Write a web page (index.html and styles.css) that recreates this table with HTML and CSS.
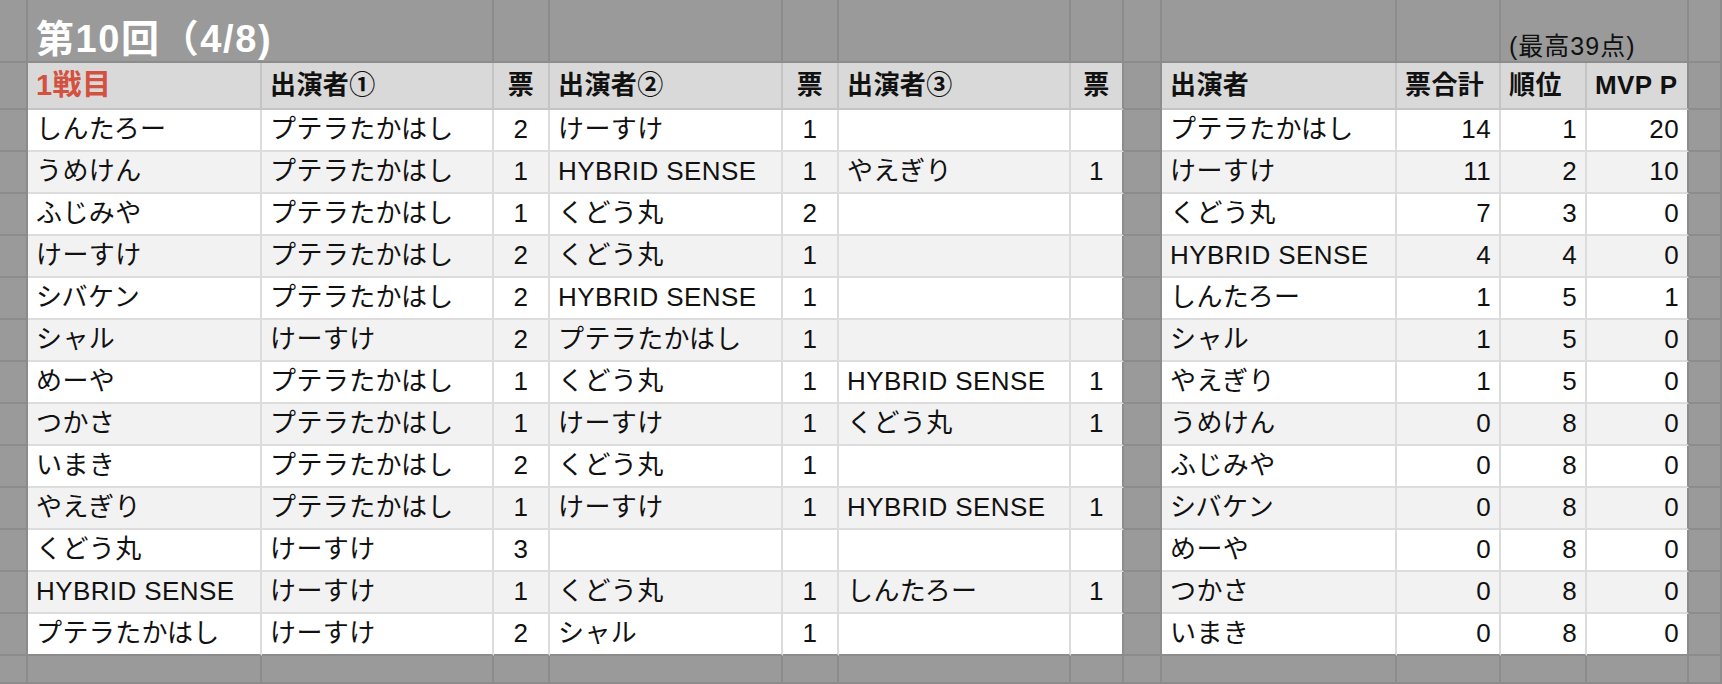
FILE: index.html
```html
<!DOCTYPE html>
<html lang="ja">
<head>
<meta charset="utf-8">
<link rel="stylesheet" href="styles.css">
</head>
<body>
<div class="sheet">
  <div class="row">
    <div class="g"></div>
    <div class="g title">第10回（4/8)</div>
    <div class="g"></div><div class="g"></div><div class="g"></div><div class="g"></div><div class="g"></div>
    <div class="g"></div>
    <div class="g"></div><div class="g"></div>
    <div class="g note">(最高39点)</div>
    <div class="g"></div>
  </div>
  <div class="row">
    <div class="g"></div>
    <div class="h red">1戦目</div><div class="h">出演者①</div><div class="h m">票</div><div class="h">出演者②</div><div class="h m">票</div><div class="h">出演者③</div><div class="h m end">票</div>
    <div class="g"></div>
    <div class="h">出演者</div><div class="h">票合計</div><div class="h">順位</div><div class="h end">MVP P</div>
    <div class="g"></div>
  </div>
  <div class="row">
    <div class="g"></div>
    <div class="c">しんたろー</div><div class="c">プテラたかはし</div><div class="c m">2</div><div class="c">けーすけ</div><div class="c m">1</div><div class="c"></div><div class="c m end"></div>
    <div class="g"></div>
    <div class="c">プテラたかはし</div><div class="c r">14</div><div class="c r">1</div><div class="c r end">20</div>
    <div class="g"></div>
  </div>
  <div class="row alt">
    <div class="g"></div>
    <div class="c">うめけん</div><div class="c">プテラたかはし</div><div class="c m">1</div><div class="c">HYBRID SENSE</div><div class="c m">1</div><div class="c">やえぎり</div><div class="c m end">1</div>
    <div class="g"></div>
    <div class="c">けーすけ</div><div class="c r">11</div><div class="c r">2</div><div class="c r end">10</div>
    <div class="g"></div>
  </div>
  <div class="row">
    <div class="g"></div>
    <div class="c">ふじみや</div><div class="c">プテラたかはし</div><div class="c m">1</div><div class="c">くどう丸</div><div class="c m">2</div><div class="c"></div><div class="c m end"></div>
    <div class="g"></div>
    <div class="c">くどう丸</div><div class="c r">7</div><div class="c r">3</div><div class="c r end">0</div>
    <div class="g"></div>
  </div>
  <div class="row alt">
    <div class="g"></div>
    <div class="c">けーすけ</div><div class="c">プテラたかはし</div><div class="c m">2</div><div class="c">くどう丸</div><div class="c m">1</div><div class="c"></div><div class="c m end"></div>
    <div class="g"></div>
    <div class="c">HYBRID SENSE</div><div class="c r">4</div><div class="c r">4</div><div class="c r end">0</div>
    <div class="g"></div>
  </div>
  <div class="row">
    <div class="g"></div>
    <div class="c">シバケン</div><div class="c">プテラたかはし</div><div class="c m">2</div><div class="c">HYBRID SENSE</div><div class="c m">1</div><div class="c"></div><div class="c m end"></div>
    <div class="g"></div>
    <div class="c">しんたろー</div><div class="c r">1</div><div class="c r">5</div><div class="c r end">1</div>
    <div class="g"></div>
  </div>
  <div class="row alt">
    <div class="g"></div>
    <div class="c">シャル</div><div class="c">けーすけ</div><div class="c m">2</div><div class="c">プテラたかはし</div><div class="c m">1</div><div class="c"></div><div class="c m end"></div>
    <div class="g"></div>
    <div class="c">シャル</div><div class="c r">1</div><div class="c r">5</div><div class="c r end">0</div>
    <div class="g"></div>
  </div>
  <div class="row">
    <div class="g"></div>
    <div class="c">めーや</div><div class="c">プテラたかはし</div><div class="c m">1</div><div class="c">くどう丸</div><div class="c m">1</div><div class="c">HYBRID SENSE</div><div class="c m end">1</div>
    <div class="g"></div>
    <div class="c">やえぎり</div><div class="c r">1</div><div class="c r">5</div><div class="c r end">0</div>
    <div class="g"></div>
  </div>
  <div class="row alt">
    <div class="g"></div>
    <div class="c">つかさ</div><div class="c">プテラたかはし</div><div class="c m">1</div><div class="c">けーすけ</div><div class="c m">1</div><div class="c">くどう丸</div><div class="c m end">1</div>
    <div class="g"></div>
    <div class="c">うめけん</div><div class="c r">0</div><div class="c r">8</div><div class="c r end">0</div>
    <div class="g"></div>
  </div>
  <div class="row">
    <div class="g"></div>
    <div class="c">いまき</div><div class="c">プテラたかはし</div><div class="c m">2</div><div class="c">くどう丸</div><div class="c m">1</div><div class="c"></div><div class="c m end"></div>
    <div class="g"></div>
    <div class="c">ふじみや</div><div class="c r">0</div><div class="c r">8</div><div class="c r end">0</div>
    <div class="g"></div>
  </div>
  <div class="row alt">
    <div class="g"></div>
    <div class="c">やえぎり</div><div class="c">プテラたかはし</div><div class="c m">1</div><div class="c">けーすけ</div><div class="c m">1</div><div class="c">HYBRID SENSE</div><div class="c m end">1</div>
    <div class="g"></div>
    <div class="c">シバケン</div><div class="c r">0</div><div class="c r">8</div><div class="c r end">0</div>
    <div class="g"></div>
  </div>
  <div class="row">
    <div class="g"></div>
    <div class="c">くどう丸</div><div class="c">けーすけ</div><div class="c m">3</div><div class="c"></div><div class="c m"></div><div class="c"></div><div class="c m end"></div>
    <div class="g"></div>
    <div class="c">めーや</div><div class="c r">0</div><div class="c r">8</div><div class="c r end">0</div>
    <div class="g"></div>
  </div>
  <div class="row alt">
    <div class="g"></div>
    <div class="c">HYBRID SENSE</div><div class="c">けーすけ</div><div class="c m">1</div><div class="c">くどう丸</div><div class="c m">1</div><div class="c">しんたろー</div><div class="c m end">1</div>
    <div class="g"></div>
    <div class="c">つかさ</div><div class="c r">0</div><div class="c r">8</div><div class="c r end">0</div>
    <div class="g"></div>
  </div>
  <div class="row last">
    <div class="g"></div>
    <div class="c">プテラたかはし</div><div class="c">けーすけ</div><div class="c m">2</div><div class="c">シャル</div><div class="c m">1</div><div class="c"></div><div class="c m end"></div>
    <div class="g"></div>
    <div class="c">いまき</div><div class="c r">0</div><div class="c r">8</div><div class="c r end">0</div>
    <div class="g"></div>
  </div>
  <div class="row">
    <div class="g"></div>
    <div class="g"></div><div class="g"></div><div class="g"></div><div class="g"></div><div class="g"></div><div class="g"></div><div class="g"></div>
    <div class="g"></div>
    <div class="g"></div><div class="g"></div><div class="g"></div><div class="g"></div>
    <div class="g"></div>
  </div>
</div>
</body>
</html>
```
FILE: styles.css
```css
* {
  box-sizing: border-box;
  margin: 0;
  padding: 0;
}

html, body {
  width: 1722px;
  height: 684px;
  overflow: hidden;
}

body {
  background: #9a9a9a;
  font-family: "Liberation Sans", "Noto Sans CJK JP", sans-serif;
  font-size: 26px;
  letter-spacing: 0.4px;
  color: #111;
}

.sheet {
  display: grid;
  grid-template-columns: 28px 234px 232px 56px 233px 56px 232px 53px 38px 235px 104px 86px 102px 33px;
  grid-template-rows: 63px 47px repeat(13, 42px) 28px;
}

.row {
  display: contents;
}

.row > div {
  border-style: solid;
  border-width: 0 2px 2px 0;
  display: flex;
  align-items: center;
  padding: 0 8px;
  white-space: nowrap;
  line-height: 1.2;
}

.g {
  background: #9a9a9a;
  border-color: #8c8c8c;
}

.c {
  background: #ffffff;
  border-color: #dcdcdc;
}

.alt .c {
  background: #f2f2f2;
}

.h {
  background: #d9d9d9;
  border-color: #c4c4c4;
  font-weight: bold;
  color: #111;
}

.c.end, .h.end {
  border-right-color: #8c8c8c;
}

.last > .c {
  border-bottom-color: #8c8c8c;
}

.r {
  justify-content: flex-end;
}

.m {
  justify-content: center;
}

.row > .red {
  color: #d4513f;
  font-size: 29px;
}

.row > .title {
  grid-column: span 2;
  align-items: flex-end;
  padding-bottom: 0;
  line-height: 1.12;
  letter-spacing: 1.6px;
  color: #ffffff;
  font-weight: bold;
  font-size: 38px;
}

.row > .note {
  grid-column: span 2;
  align-items: flex-end;
  padding-bottom: 0;
  letter-spacing: 1px;
  font-size: 25px;
  color: #111;
}
```
